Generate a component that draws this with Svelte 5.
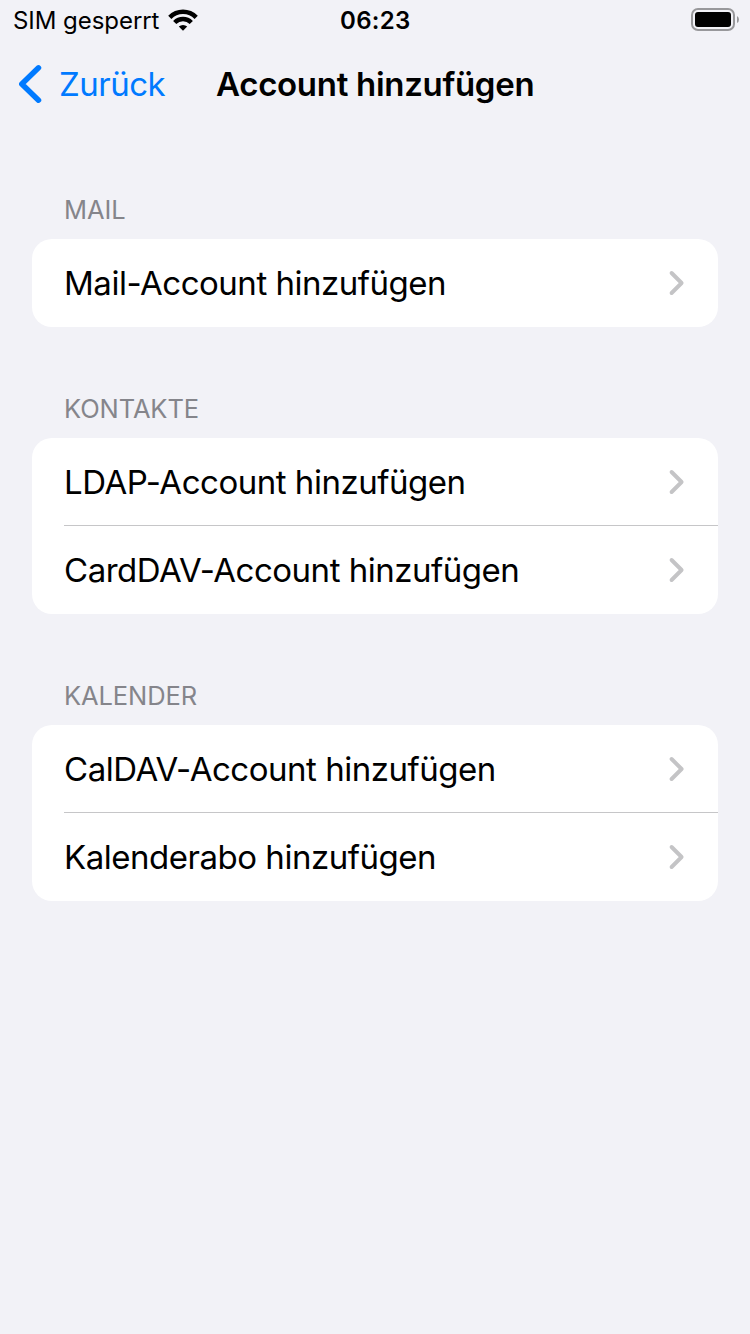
<script>
  const groups = [
    { title: 'MAIL', rows: ['Mail-Account hinzufügen'] },
    { title: 'KONTAKTE', rows: ['LDAP-Account hinzufügen', 'CardDAV-Account hinzufügen'] },
    { title: 'KALENDER', rows: ['CalDAV-Account hinzufügen', 'Kalenderabo hinzufügen'] }
  ];
</script>

<div class="screen">
  <div class="status">
    <div class="left">
      <span>SIM gesperrt</span>
      <svg class="wifi" width="30" height="22" viewBox="0 0 30 22">
        <path d="M15 21.8 L10.8 17.6 A6.2 6.2 0 0 1 19.2 17.6 Z" />
        <path d="M5.1 12 A13.9 13.9 0 0 1 24.9 12 L21.7 15.1 A9.5 9.5 0 0 0 8.3 15.1 Z" />
        <path d="M0.2 6.7 A20.8 20.8 0 0 1 29.8 6.7 L26.6 9.9 A16.4 16.4 0 0 0 3.4 9.9 Z" />
      </svg>
    </div>
    <span class="time">06:23</span>
    <svg class="battery" width="48" height="24" viewBox="0 0 48 24">
      <rect x="1" y="1" width="42" height="21" rx="6" fill="none" stroke="#98989b" stroke-width="2" />
      <rect x="4" y="4" width="36" height="15" rx="3" />
      <path d="M46 8 Q48 9 48 11.5 Q48 14 46 15 Z" fill="#98989b" />
    </svg>
  </div>
  <header>
    <svg class="back" width="24" height="40" viewBox="0 0 24 40">
      <path d="M20.5 3.8 L3.8 20 L20.5 36.2" fill="none" stroke="#007aff" stroke-width="5.5" stroke-linecap="round" stroke-linejoin="round" />
    </svg>
    <span class="backlabel">Zurück</span>
    <h1>Account hinzufügen</h1>
  </header>
  <main>
    {#each groups as group}
      <section>
        <h2>{group.title}</h2>
        <div class="card">
          {#each group.rows as label}
            <div class="row">
              <span>{label}</span>
              <svg width="18" height="26" viewBox="0 0 18 26">
                <path d="M3.6 3 L13.6 13 L3.6 23" fill="none" stroke="#c4c4c6" stroke-width="3.9" stroke-linecap="round" stroke-linejoin="round" />
              </svg>
            </div>
          {/each}
        </div>
      </section>
    {/each}
  </main>
</div>

<style>
  :global(body) { background: #f2f2f7; }
  .screen { width: 750px; height: 1334px; overflow: hidden; background: #f2f2f7; font-family: Inter, "Liberation Sans", sans-serif; color: #000; }
  span, h1, h2 { white-space: nowrap; }
  .status { height: 40px; box-sizing: border-box; padding: 0 11px 0 13px; display: grid; grid-template-columns: 327px 1fr auto; align-items: center; font-size: 24px; }
  .left { display: flex; align-items: center; gap: 9px; letter-spacing: -0.05px; }
  .time { font-weight: 600; letter-spacing: 0.3px; }
  .battery { display: block; }
  header { height: 88px; display: flex; align-items: center; padding-left: 18px; font-size: 33px; }
  .backlabel { color: #007aff; margin-left: 17px; width: 157px; letter-spacing: -0.5px; }
  h1 { margin: 0; font-size: 33px; font-weight: 600; letter-spacing: -0.3px; }
  main { padding: 0 32px; }
  section { padding-top: 67px; }
  h2 { margin: 0; padding-left: 32px; height: 44px; line-height: 30px; font-size: 25.5px; font-weight: 400; letter-spacing: -0.1px; color: #85858b; }
  .card { background: #fff; border-radius: 20px; }
  .row { height: 88px; margin-left: 32px; padding-right: 32px; display: flex; align-items: center; justify-content: space-between; font-size: 33px; letter-spacing: -0.48px; box-sizing: border-box; }
  .row:not(:last-child) { box-shadow: inset 0 -1px #c6c6c8; }
</style>
